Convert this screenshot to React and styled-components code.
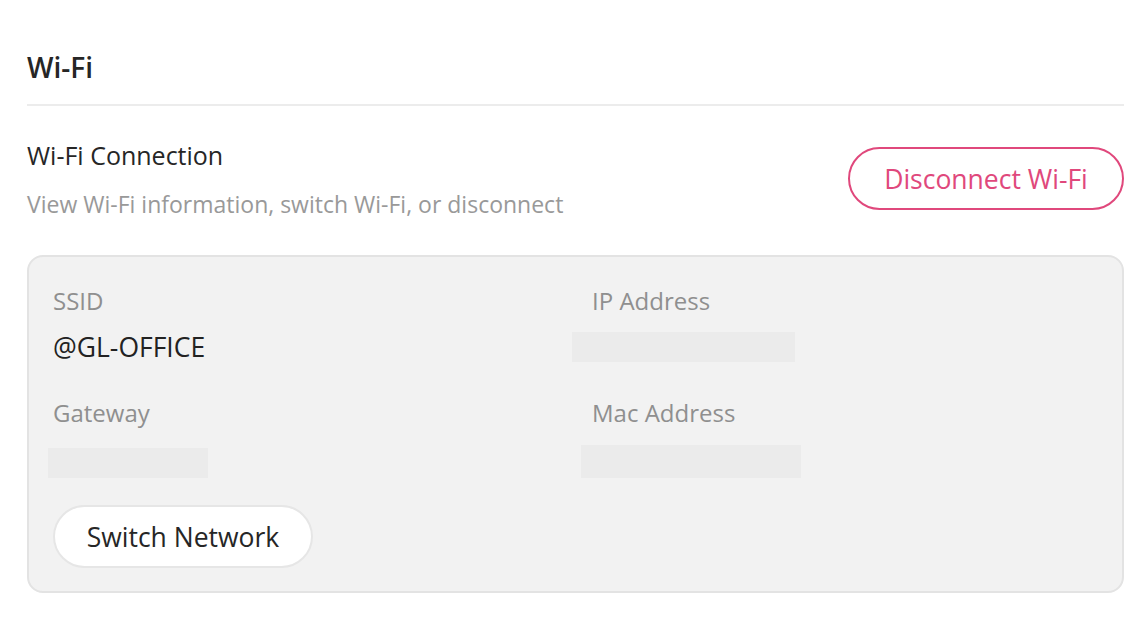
import React from 'react';
import styled, { createGlobalStyle } from 'styled-components';

const GlobalStyle = createGlobalStyle`
    html, body {
        margin: 0;
        background: #ffffff;
        font-family: "Open Sans", "Noto Sans", sans-serif;
    }
`;

const Page = styled.div`
    padding: 0 23px 0 27px;
`;

const SectionTitle = styled.div`
    height: 106px;
    box-sizing: border-box;
    padding-top: 49px;
    font-size: 28px;
    font-weight: 600;
    color: #262626;
    line-height: 36px;
    border-bottom: 2px solid #ececec;
`;

const ConnectionRow = styled.div`
    display: flex;
    align-items: flex-start;
    justify-content: space-between;
    padding-top: 32px;
`;

const RowTitle = styled.div`
    font-size: 25px;
    line-height: 34px;
    color: #262626;
`;

const RowHint = styled.div`
    margin-top: 17px;
    font-size: 23px;
    line-height: 30px;
    color: #999999;
`;

const PillButton = styled.button`
    height: 63px;
    padding: 0;
    border-radius: 32px;
    font-family: inherit;
    font-size: 26.5px;
    background: #ffffff;
    color: ${(p) => (p.$danger ? '#e0487c' : '#262626')};
    border: 2px solid ${(p) => (p.$danger ? '#e0487c' : '#e6e6e6')};
    cursor: pointer;
`;

const DisconnectButton = styled(PillButton)`
    margin-top: 9px;
    width: 276px;
`;

const InfoCard = styled.div`
    margin-top: 36px;
    height: 338px;
    box-sizing: border-box;
    background: #f2f2f2;
    border: 2px solid #e3e3e3;
    border-radius: 16px;
    padding: 28px 24px 0 24px;
`;

const InfoGrid = styled.div`
    display: grid;
    grid-template-columns: 539px 1fr;
    align-items: start;
    row-gap: 33px;
`;

const Field = styled.div`
    display: flex;
    flex-direction: column;
    align-items: flex-start;
`;

const Label = styled.div`
    font-size: 24px;
    line-height: 32px;
    color: #8f8f8f;
`;

const Value = styled.div`
    margin-top: 13px;
    font-size: 26.5px;
    line-height: 34px;
    color: #222222;
`;

const Redacted = styled.div`
    width: ${(p) => p.$w}px;
    height: ${(p) => p.$h}px;
    margin-top: ${(p) => p.$top}px;
    margin-left: ${(p) => p.$left}px;
    background: #ebebeb;
`;

const SwitchButton = styled(PillButton)`
    margin-top: 27px;
    width: 260px;
`;

const fields = [
    { label: 'SSID', value: '@GL-OFFICE' },
    { label: 'IP Address', redacted: { w: 223, h: 30, top: 15, left: -20 } },
    { label: 'Gateway', redacted: { w: 160, h: 30, top: 19, left: -5 } },
    { label: 'Mac Address', redacted: { w: 220, h: 33, top: 16, left: -11 } },
];

const App = () => {
    return (
        <Page>
            <GlobalStyle />
            <SectionTitle>Wi-Fi</SectionTitle>
            <ConnectionRow>
                <div>
                    <RowTitle>Wi-Fi Connection</RowTitle>
                    <RowHint>View Wi-Fi information, switch Wi-Fi, or disconnect</RowHint>
                </div>
                <DisconnectButton $danger>Disconnect Wi-Fi</DisconnectButton>
            </ConnectionRow>
            <InfoCard>
                <InfoGrid>
                    {
                        fields.map((field) => (
                            <Field key={field.label}>
                                <Label>{field.label}</Label>
                                {field.value && <Value>{field.value}</Value>}
                                {field.redacted && (
                                    <Redacted
                                        $w={field.redacted.w}
                                        $h={field.redacted.h}
                                        $top={field.redacted.top}
                                        $left={field.redacted.left}
                                    />
                                )}
                            </Field>
                        ))
                    }
                </InfoGrid>
                <SwitchButton>Switch Network</SwitchButton>
            </InfoCard>
        </Page>
    );
};

export default App;
